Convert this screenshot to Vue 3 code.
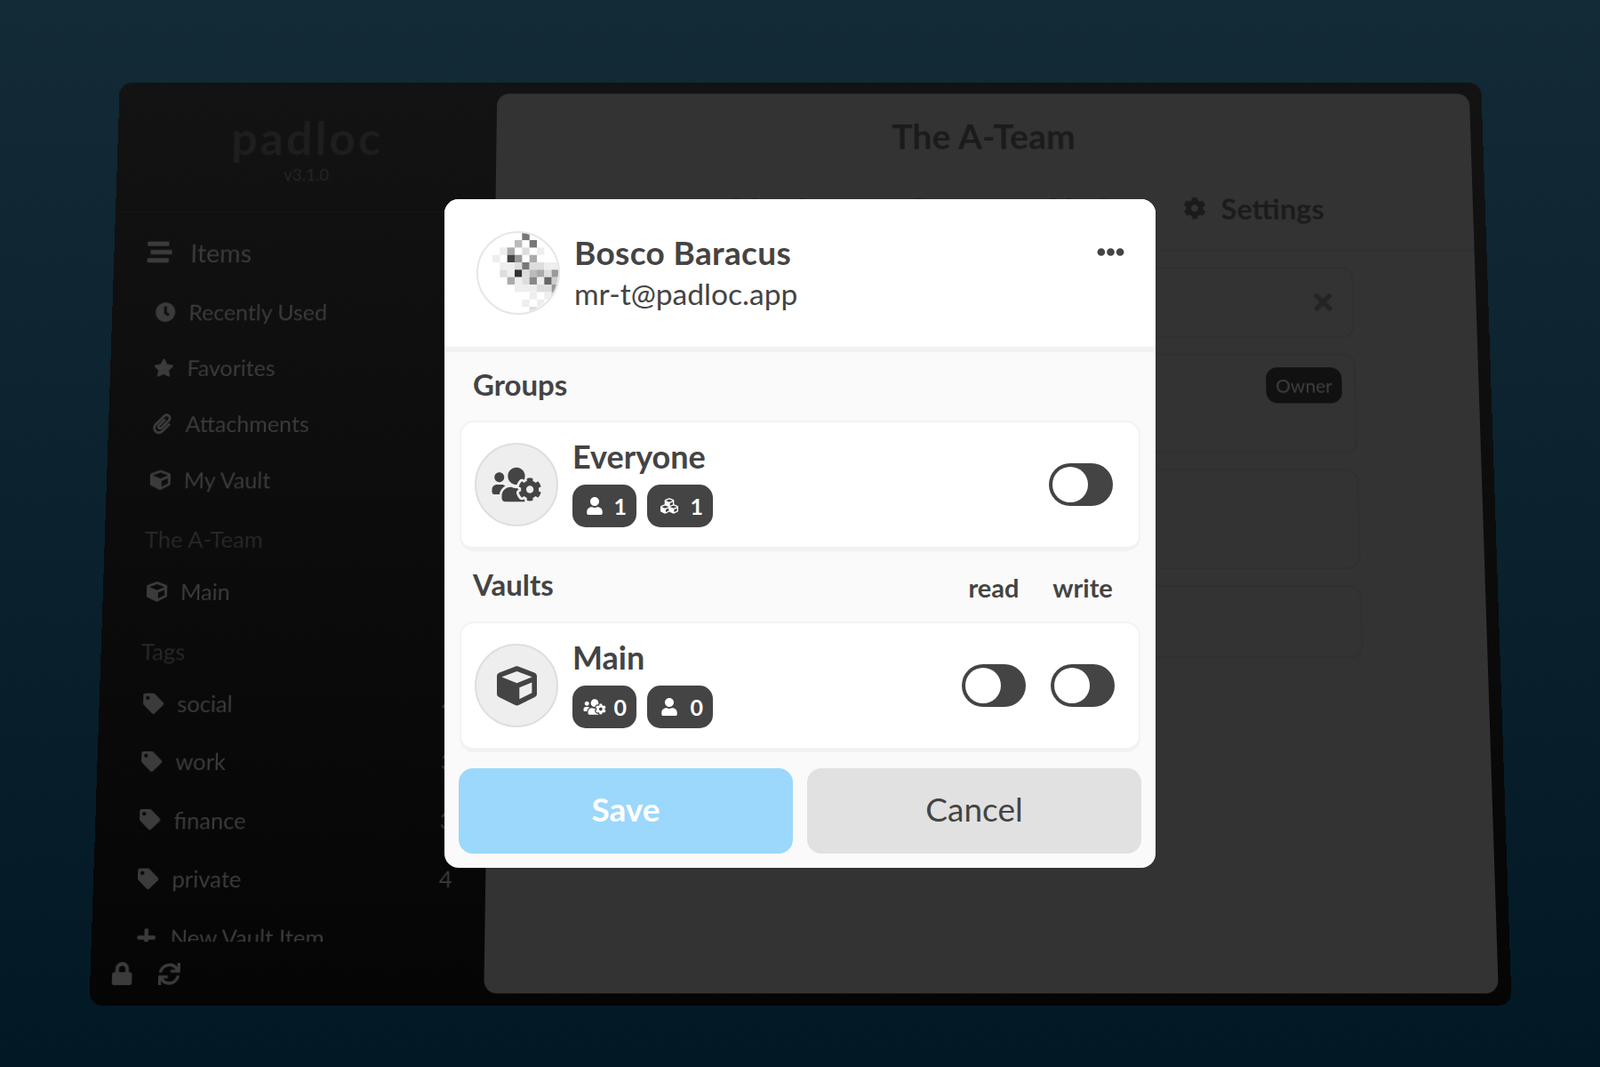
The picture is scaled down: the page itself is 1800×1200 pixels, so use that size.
<script setup>
const icons = {
  stream: ['0 0 512 512', 'M16 128h416c8.84 0 16-7.16 16-16V48c0-8.84-7.16-16-16-16H16C7.16 32 0 39.16 0 48v64c0 8.84 7.16 16 16 16zm480 80H80c-8.84 0-16 7.16-16 16v64c0 8.84 7.16 16 16 16h416c8.84 0 16-7.16 16-16v-64c0-8.84-7.16-16-16-16zm-64 176H16c-8.84 0-16 7.16-16 16v64c0 8.84 7.16 16 16 16h416c8.84 0 16-7.16 16-16v-64c0-8.84-7.16-16-16-16z'],
  clock: ['0 0 512 512', 'M256 8C119 8 8 119 8 256s111 248 248 248 248-111 248-248S393 8 256 8zm57.1 350.1L224.9 294c-3.1-2.3-4.9-5.9-4.9-9.7V116c0-6.6 5.4-12 12-12h48c6.6 0 12 5.4 12 12v137.7l63.5 46.2c5.4 3.9 6.5 11.4 2.6 16.8l-28.2 38.8c-3.9 5.3-11.4 6.5-16.8 2.6z'],
  star: ['0 0 576 512', 'M259.3 17.8L194 150.2 47.9 171.5c-26.2 3.8-36.7 36.1-17.7 54.6l105.7 103-25 145.5c-4.5 26.3 23.2 46 46.4 33.7L288 439.6l130.7 68.7c23.2 12.2 50.9-7.4 46.4-33.7l-25-145.5 105.7-103c19-18.5 8.5-50.8-17.7-54.6L382 150.2 316.7 17.8c-11.7-23.6-45.6-23.9-57.4 0z'],
  paperclip: ['0 0 448 512', 'M43.246 466.142c-58.43-60.289-57.341-157.511 1.386-217.581L254.392 34c44.316-45.332 116.351-45.336 160.671 0 43.89 44.894 43.943 117.329 0 162.276L232.214 383.128c-29.855 30.537-78.633 30.111-107.982-.998-28.275-29.97-27.368-77.473 1.452-106.953l143.743-146.835c6.182-6.314 16.312-6.422 22.626-.241l22.861 22.379c6.315 6.182 6.422 16.312.241 22.626L171.427 319.927c-4.932 5.045-5.236 13.428-.648 18.292 4.372 4.634 11.245 4.711 15.688.165l182.849-186.851c19.613-20.062 19.613-52.725-.011-72.798-19.189-19.627-49.957-19.637-69.154 0L90.39 293.295c-34.763 35.56-35.299 93.12-1.191 128.313 34.01 35.093 88.985 35.137 123.058.286l172.06-175.999c6.177-6.319 16.307-6.433 22.626-.256l22.877 22.364c6.319 6.177 6.434 16.307.256 22.626l-172.06 175.998c-59.576 60.938-155.943 60.216-214.77-.485z'],
  cube: ['0 0 512 512', 'M239.1 6.3l-208 78c-18.7 7-31.1 25-31.1 45v225.1c0 18.2 10.3 34.8 26.5 42.9l208 104c13.5 6.8 29.4 6.8 42.9 0l208-104c16.3-8.1 26.5-24.8 26.5-42.9V129.3c0-20-12.4-37.9-31.1-44.9l-208-78C262 2.2 250 2.2 239.1 6.3zM256 68.4l192 72v1.1l-192 78-192-78v-1.1l192-72zm32 356V275.5l160-65v133.9l-160 80z'],
  tag: ['0 0 512 512', 'M0 252.118V48C0 21.49 21.49 0 48 0h204.118a48 48 0 0 1 33.941 14.059l211.882 211.882c18.745 18.745 18.745 49.137 0 67.882L293.823 497.941c-18.745 18.745-49.137 18.745-67.882 0L14.059 286.059A48 48 0 0 1 0 252.118zM112 64c-26.51 0-48 21.49-48 48s21.49 48 48 48 48-21.49 48-48-21.49-48-48-48z'],
  plus: ['0 0 448 512', 'M416 208H272V64c0-17.67-14.33-32-32-32h-32c-17.67 0-32 14.33-32 32v144H32c-17.67 0-32 14.33-32 32v32c0 17.67 14.33 32 32 32h144v144c0 17.67 14.33 32 32 32h32c17.67 0 32-14.33 32-32V304h144c17.67 0 32-14.33 32-32v-32c0-17.67-14.33-32-32-32z'],
  lock: ['0 0 448 512', 'M400 224h-24v-72C376 68.2 307.8 0 224 0S72 68.2 72 152v72H48c-26.5 0-48 21.5-48 48v192c0 26.5 21.5 48 48 48h352c26.5 0 48-21.5 48-48V272c0-26.5-21.5-48-48-48zm-104 0H152v-72c0-39.7 32.3-72 72-72s72 32.3 72 72v72z'],
  sync: ['0 0 512 512', 'M440.65 12.57l4 82.77A247.16 247.16 0 0 0 255.83 8C134.73 8 33.91 94.92 12.29 209.82A12 12 0 0 0 24.09 224h49.05a12 12 0 0 0 11.67-9.26 175.91 175.91 0 0 1 317-56.94l-101.46-4.86a12 12 0 0 0-12.57 12v47.41a12 12 0 0 0 12 12H500a12 12 0 0 0 12-12V12a12 12 0 0 0-12-12h-47.37a12 12 0 0 0-11.98 12.57zM255.83 432a175.61 175.61 0 0 1-146-77.8l101.8 4.87a12 12 0 0 0 12.57-12v-47.4a12 12 0 0 0-12-12H12a12 12 0 0 0-12 12V500a12 12 0 0 0 12 12h47.35a12 12 0 0 0 12-12.6l-4.15-82.57A247.17 247.17 0 0 0 255.83 504c121.11 0 221.93-86.92 243.55-201.82a12 12 0 0 0-11.8-14.18h-49.05a12 12 0 0 0-11.67 9.26A175.86 175.86 0 0 1 255.83 432z'],
  cog: ['0 0 512 512', 'M487.4 315.7l-42.6-24.6c4.3-23.2 4.3-47 0-70.2l42.6-24.6c4.9-2.8 7.1-8.6 5.5-14-11.1-35.6-30-67.8-54.7-94.6-3.8-4.1-10-5.1-14.8-2.3L380.8 110c-17.9-15.4-38.5-27.3-60.8-35.1V25.8c0-5.6-3.9-10.5-9.4-11.7-36.7-8.2-74.3-7.8-109.2 0-5.5 1.2-9.4 6.1-9.4 11.7V75c-22.2 7.9-42.8 19.8-60.8 35.1L88.7 85.5c-4.9-2.8-11-1.9-14.8 2.3-24.7 26.7-43.6 58.9-54.7 94.6-1.7 5.4.6 11.2 5.5 14L67.3 221c-4.3 23.2-4.3 47 0 70.2l-42.6 24.6c-4.9 2.8-7.1 8.6-5.5 14 11.1 35.6 30 67.8 54.7 94.6 3.8 4.1 10 5.1 14.8 2.3l42.6-24.6c17.9 15.4 38.5 27.3 60.8 35.1v49.2c0 5.6 3.9 10.5 9.4 11.7 36.7 8.2 74.3 7.8 109.2 0 5.5-1.2 9.4-6.1 9.4-11.7v-49.2c22.2-7.9 42.8-19.8 60.8-35.1l42.6 24.6c4.9 2.8 11 1.9 14.8-2.3 24.7-26.7 43.6-58.9 54.7-94.6 1.5-5.5-.7-11.3-5.6-14.1zM256 336c-44.1 0-80-35.9-80-80s35.9-80 80-80 80 35.9 80 80-35.9 80-80 80z'],
  times: ['0 0 352 512', 'M242.72 256l100.07-100.07c12.28-12.28 12.28-32.19 0-44.48l-22.24-22.24c-12.28-12.28-32.19-12.28-44.48 0L176 189.28 75.93 89.21c-12.28-12.28-32.19-12.28-44.48 0L9.21 111.45c-12.28 12.28-12.28 32.19 0 44.48L109.28 256 9.21 356.07c-12.28 12.28-12.28 32.19 0 44.48l22.24 22.24c12.28 12.28 32.2 12.28 44.48 0L176 322.72l100.07 100.07c12.28 12.28 32.2 12.28 44.48 0l22.24-22.24c12.28-12.28 12.28-32.19 0-44.48L242.72 256z'],
  dots: ['0 0 512 512', 'M328 256c0 39.8-32.2 72-72 72s-72-32.2-72-72 32.2-72 72-72 72 32.2 72 72zm104-72c-39.8 0-72 32.2-72 72s32.2 72 72 72 72-32.2 72-72-32.2-72-72-72zm-352 0c-39.8 0-72 32.2-72 72s32.2 72 72 72 72-32.2 72-72-32.2-72-72-72z'],
  user: ['0 0 448 512', 'M224 256c70.7 0 128-57.3 128-128S294.7 0 224 0 96 57.3 96 128s57.3 128 128 128zm89.6 32h-16.7c-22.2 10.2-46.9 16-72.9 16s-50.6-5.8-72.9-16h-16.7C60.2 288 0 348.2 0 422.4V464c0 26.5 21.5 48 48 48h352c26.5 0 48-21.5 48-48v-41.6c0-74.2-60.2-134.4-134.4-134.4z'],
  cubes: ['0 0 512 512', 'M488.6 250.2L392 214V105.5c0-15-9.3-28.4-23.4-33.7l-100-37.5c-8.1-3.1-17.1-3.1-25.3 0l-100 37.5c-14.1 5.3-23.4 18.7-23.4 33.7V214l-96.6 36.2C9.3 255.5 0 268.9 0 283.9V394c0 13.6 7.7 26.1 19.9 32.2l100 50c10.1 5.1 22.1 5.1 32.2 0l103.9-52 103.9 52c10.1 5.1 22.1 5.1 32.2 0l100-50c12.2-6.1 19.9-18.6 19.9-32.2V283.9c0-15-9.3-28.4-23.4-33.7zM358 214.8l-85 31.9v-68.2l85-37v73.3zM154 104.1l102-38.2 102 38.2v.6l-102 41.4-102-41.4v-.6zm84 291.1l-85 42.5v-79.1l85-38.8v75.4zm0-112l-102 41.4-102-41.4v-.6l102-38.2 102 38.2v.6zm240 112l-85 42.5v-79.1l85-38.8v75.4zm0-112l-102 41.4-102-41.4v-.6l102-38.2 102 38.2v.6z'],
  usersCog: ['0 0 640 512', 'M610.5 341.3c2.6-14.1 2.6-28.5 0-42.6l25.8-14.9c3-1.7 4.3-5.2 3.3-8.5-6.7-21.6-18.2-41.2-33.2-57.4-2.3-2.5-6-3.1-9-1.4l-25.8 14.9c-10.9-9.3-23.4-16.5-36.9-21.3v-29.8c0-3.4-2.4-6.4-5.7-7.1-22.3-5-45-4.8-66.2 0-3.3.7-5.7 3.7-5.7 7.1v29.8c-13.5 4.8-26 12-36.9 21.3l-25.8-14.9c-2.9-1.7-6.7-1.1-9 1.4-15 16.2-26.5 35.8-33.2 57.4-1 3.3.4 6.8 3.3 8.5l25.8 14.9c-2.6 14.1-2.6 28.5 0 42.6l-25.8 14.9c-3 1.7-4.3 5.2-3.3 8.5 6.7 21.6 18.2 41.1 33.2 57.4 2.3 2.5 6 3.1 9 1.4l25.8-14.9c10.9 9.3 23.4 16.5 36.9 21.3v29.8c0 3.4 2.4 6.4 5.7 7.1 22.3 5 45 4.8 66.2 0 3.3-.7 5.7-3.7 5.7-7.1v-29.8c13.5-4.8 26-12 36.9-21.3l25.8 14.9c2.9 1.7 6.7 1.1 9-1.4 15-16.2 26.5-35.8 33.2-57.4 1-3.3-.4-6.8-3.3-8.5l-25.8-14.9zM496 368.5c-26.8 0-48.5-21.8-48.5-48.5s21.8-48.5 48.5-48.5 48.5 21.8 48.5 48.5-21.7 48.5-48.5 48.5zM96 224c35.3 0 64-28.7 64-64s-28.7-64-64-64-64 28.7-64 64 28.7 64 64 64zm224 32c1.9 0 3.7-.5 5.6-.6 8.3-21.7 20.5-42.1 36.3-59.2 7.4-8 17.9-12.6 28.9-12.6 6.9 0 13.7 1.8 19.6 5.3l7.9 4.6c.8-.5 1.6-.9 2.4-1.4 7-14.6 11.2-30.8 11.2-48 0-61.9-50.1-112-112-112S208 82.1 208 144c0 61.9 50.1 112 112 112zm105.2 194.5c-2.3-1.2-4.6-2.6-6.8-3.9-8.2 4.8-15.3 9.8-27.5 9.8-10.9 0-21.4-4.6-28.9-12.6-18.3-19.8-32.3-43.9-40.2-69.6-10.7-34.5 24.9-49.7 25.8-50.3-.1-2.6-.1-5.2 0-7.8l-7.9-4.6c-3.8-2.2-7-5-9.8-8.1-3.3.2-6.5.6-9.8.6-24.6 0-47.6-6-68.5-16h-8.3C179.6 288 128 339.6 128 403.2V432c0 26.5 21.5 48 48 48h255.4c-3.7-6-6.2-12.8-6.2-20.3v-9.2zM173.1 274.6C161.5 263.1 145.6 256 128 256H64c-35.3 0-64 28.7-64 64v32c0 17.7 14.3 32 32 32h65.9c6.3-47.4 34.9-87.3 75.2-109.4z'],
}

const topItems = [
  { icon: 'clock', label: 'Recently Used' },
  { icon: 'star', label: 'Favorites' },
  { icon: 'paperclip', label: 'Attachments' },
  { icon: 'cube', label: 'My Vault', count: 1 },
]
const tagItems = [
  { label: 'social', count: 4 },
  { label: 'work', count: 3 },
  { label: 'finance', count: 3 },
  { label: 'private', count: 4 },
]

// identicon cells: column, row, grey
const cells = [
  [4,0,'#777'],
  [3,1,'#bbb'],[5,1,'#777'],
  [1,2,'#eee'],[2,2,'#aaa'],[4,2,'#ddd'],[6,2,'#eee'],
  [0,3,'#eee'],[2,3,'#444'],[3,3,'#999'],[5,3,'#aaa'],
  [1,4,'#eee'],[2,4,'#eee'],[3,4,'#ddd'],[4,4,'#777'],[5,4,'#ddd'],[6,4,'#ddd'],[7,4,'#eee'],[8,4,'#eee'],
  [1,5,'#ddd'],[2,5,'#eee'],[3,5,'#333'],[4,5,'#ddd'],[5,5,'#bbb'],[6,5,'#aaa'],[7,5,'#ddd'],[8,5,'#999'],
  [2,6,'#aaa'],[3,6,'#eee'],[4,6,'#ddd'],[5,6,'#888'],[6,6,'#eee'],[7,6,'#666'],[8,6,'#ccc'],
  [3,7,'#eee'],[4,7,'#eee'],[5,7,'#eee'],[6,7,'#ddd'],[7,7,'#ddd'],[8,7,'#999'],
  [5,8,'#eee'],[7,8,'#eee'],[8,8,'#bbb'],
  [4,9,'#eee'],[6,9,'#eee'],
  [5,10,'#ddd'],
]
</script>

<template>
  <div class="stage">
    <div class="app">
      <aside class="sidebar">
        <div class="brand">
          <div class="logo">padloc</div>
          <div class="version">v3.1.0</div>
        </div>
        <nav class="nav">
          <div class="row top">
            <svg class="ic ic-top" :viewBox="icons.stream[0]"><path :d="icons.stream[1]" /></svg>
            <span>Items</span>
          </div>
          <div v-for="it in topItems" :key="it.label" class="row">
            <span class="slot"><svg class="ic" :viewBox="icons[it.icon][0]"><path :d="icons[it.icon][1]" /></svg></span>
            <span class="grow">{{ it.label }}</span>
            <span v-if="it.count" class="count">{{ it.count }}</span>
          </div>
          <div class="group g-team">The A-Team</div>
          <div class="row">
            <span class="slot"><svg class="ic" :viewBox="icons.cube[0]"><path :d="icons.cube[1]" /></svg></span>
            <span class="grow">Main</span>
          </div>
          <div class="group g-tags">Tags</div>
          <div v-for="t in tagItems" :key="t.label" class="row tagrow">
            <span class="slot"><svg class="ic" :viewBox="icons.tag[0]"><path :d="icons.tag[1]" /></svg></span>
            <span class="grow">{{ t.label }}</span>
            <span class="count">{{ t.count }}</span>
          </div>
          <div class="row">
            <span class="slot"><svg class="ic" :viewBox="icons.plus[0]"><path :d="icons.plus[1]" /></svg></span>
            <span class="grow">New Vault Item</span>
          </div>
        </nav>
        <div class="foot">
          <svg class="ic ic-lock" :viewBox="icons.lock[0]"><path :d="icons.lock[1]" /></svg>
          <svg class="ic ic-sync" :viewBox="icons.sync[0]"><path :d="icons.sync[1]" /></svg>
        </div>
      </aside>

      <main class="panel">
        <header class="panel-head">
          <div class="panel-title">The A-Team</div>
          <div class="tabs">
            <div class="tab">Members</div>
            <div class="tab">Groups</div>
            <div class="tab">Vaults</div>
            <div class="tab">
              <svg class="ic ic-gear" :viewBox="icons.cog[0]"><path :d="icons.cog[1]" /></svg>
              <span>Settings</span>
            </div>
          </div>
        </header>
        <div class="panel-body">
          <div class="ghost g1">
            <svg class="ic ic-x" :viewBox="icons.times[0]"><path :d="icons.times[1]" /></svg>
          </div>
          <div class="ghost g2"><span class="owner">Owner</span></div>
          <div class="ghost g3"></div>
          <div class="ghost g1"></div>
        </div>
      </main>
    </div>

    <div class="overlay">
      <section class="modal">
        <header class="m-head">
          <div class="avatar">
            <svg class="identicon" viewBox="0 0 94 94">
              <rect v-for="(c, i) in cells" :key="i" :x="18 + c[0] * 8.33" :y="1.7 + c[1] * 8.33" width="8.4" height="8.4" :fill="c[2]" />
            </svg>
          </div>
          <div class="who">
            <div class="name">Bosco Baracus</div>
            <div class="mail">mr-t@padloc.app</div>
          </div>
          <svg class="ic ic-dots" :viewBox="icons.dots[0]"><path :d="icons.dots[1]" /></svg>
        </header>

        <div class="m-body">
          <h2 class="sec">Groups</h2>
          <div class="card">
            <div class="circle"><svg class="ic ic-ug" :viewBox="icons.usersCog[0]"><path :d="icons.usersCog[1]" /></svg></div>
            <div class="info">
              <div class="title">Everyone</div>
              <div class="badges">
                <span class="badge b72"><svg class="ic ic-b" :viewBox="icons.user[0]"><path :d="icons.user[1]" /></svg>1</span>
                <span class="badge b74"><svg class="ic ic-b" :viewBox="icons.cubes[0]"><path :d="icons.cubes[1]" /></svg>1</span>
              </div>
            </div>
            <div class="toggle"><i class="knob"></i></div>
          </div>

          <div class="sec-row">
            <h2 class="sec">Vaults</h2>
            <span class="perm read">read</span>
            <span class="perm write">write</span>
          </div>
          <div class="card">
            <div class="circle"><svg class="ic ic-cube" :viewBox="icons.cube[0]"><path :d="icons.cube[1]" /></svg></div>
            <div class="info">
              <div class="title">Main</div>
              <div class="badges">
                <span class="badge b72"><svg class="ic ic-bu" :viewBox="icons.usersCog[0]"><path :d="icons.usersCog[1]" /></svg>0</span>
                <span class="badge b74"><svg class="ic ic-b" :viewBox="icons.user[0]"><path :d="icons.user[1]" /></svg>0</span>
              </div>
            </div>
            <div class="toggles">
              <div class="toggle"><i class="knob"></i></div>
              <div class="toggle"><i class="knob"></i></div>
            </div>
          </div>

          <div class="actions">
            <button class="btn save">Save</button>
            <button class="btn cancel">Cancel</button>
          </div>
        </div>
      </section>
    </div>
  </div>
</template>

<style>
html, body { margin: 0; padding: 0; }
</style>

<style scoped>
.stage {
  position: relative;
  width: 1800px;
  height: 1200px;
  overflow: hidden;
  display: flex;
  align-items: center;
  justify-content: center;
  background: linear-gradient(180deg, #132a37 0%, #021825 100%);
  font-family: "Lato", "Noto Sans", sans-serif;
}
.ic { display: block; fill: currentColor; flex: none; }

.app {
  width: 1565px;
  height: 1041px;
  flex: none;
  display: flex;
  border-radius: 14px;
  background: linear-gradient(180deg, #131313 0%, #050505 100%);
  transform: perspective(2000px) rotateX(4.85deg);
  color: #3b3b3b;
}
.sidebar { width: 434px; flex: none; display: flex; flex-direction: column; }
.brand {
  height: 151px;
  border-bottom: 1px solid #161616;
  display: flex;
  flex-direction: column;
  align-items: center;
}
.logo {
  margin-top: 35px;
  font-size: 53px;
  line-height: 60px;
  letter-spacing: 3px;
  font-weight: 700;
  color: #1e1e1e;
}
.version { margin-top: 1px; font-size: 19px; line-height: 24px; color: #262626; }
.nav { height: 820px; overflow: hidden; padding-top: 14px; box-sizing: border-box; display: flex; flex-direction: column; padding-left: 50px; padding-right: 37px; }
.row { height: 64px; flex: none; display: flex; align-items: center; font-size: 25.2px; }
.row.top { height: 69px; margin-left: -12px; font-size: 29px; padding-bottom: 5px; box-sizing: border-box; }
.row.tagrow { height: 64.3px; }
.slot { width: 37px; flex: none; display: flex; }
.slot .ic { width: 23px; height: 23px; margin-left: -1px; }
.ic-top { width: 28px; height: 28px; margin-right: 21px; }
.grow { flex: 1; }
.count { font-size: 25px; }
.group { flex: none; margin-left: -5px; box-sizing: border-box; font-size: 25.6px; line-height: 36px; color: #272727; }
.g-team { height: 62px; padding-top: 17px; }
.g-tags { height: 61px; padding-top: 17px; }
.foot { flex: 1; display: flex; align-items: center; gap: 29px; padding-left: 24px; }
.ic-lock { width: 22px; height: 25px; }
.ic-sync { width: 24px; height: 24px; }

.panel {
  flex: 1;
  margin: 13px 14px 13px 0;
  border-radius: 14px;
  background: #333;
  color: #1b1b1b;
  display: flex;
  flex-direction: column;
}
.panel-head { height: 182px; border-bottom: 2px solid #313131; flex: none; }
.panel-title { height: 100px; display: flex; align-items: center; justify-content: center; font-size: 40px; font-weight: 700; }
.tabs { height: 68px; display: flex; align-items: center; justify-content: flex-end; gap: 60px; padding-right: 170px; font-size: 33px; font-weight: 700; }
.tab { display: flex; align-items: center; gap: 17px; }
.ic-gear { width: 26px; height: 26px; }
.panel-body { padding: 18px 139px; display: flex; flex-direction: column; gap: 18px; }
.ghost { border: 2px solid #303030; border-radius: 14px; box-sizing: border-box; display: flex; justify-content: flex-end; }
.g1 { height: 82px; align-items: center; padding-right: 22px; }
.g2 { height: 114px; padding: 14px; }
.g3 { height: 113px; }
.ic-x { width: 22px; height: 30px; color: #242424; }
.owner { height: 41px; width: 86px; background: #111; border-radius: 13px; display: flex; align-items: center; justify-content: center; font-size: 21px; font-weight: 500; color: #3c3c3c; }

.overlay { position: absolute; inset: 0; display: flex; align-items: center; justify-content: center; }
.modal { width: 800px; border-radius: 16px; overflow: hidden; background: #fafafa; color: #444; }
.m-head {
  height: 166px;
  border-bottom: 6px solid #f2f2f2;
  background: #fff;
  display: flex;
  align-items: center;
  padding: 0 35px 0 36px;
}
.avatar { width: 94px; height: 94px; box-sizing: border-box; border: 2px solid #e6e6e6; border-radius: 50%; overflow: hidden; flex: none; position: relative; }
.identicon { position: absolute; left: -2px; top: -2px; width: 94px; height: 94px; display: block; }
.who { flex: 1; margin-left: 16px; margin-bottom: 2px; }
.name { font-size: 37px; line-height: 46px; font-weight: 700; letter-spacing: .35px; }
.mail { margin-top: 1px; font-size: 33.6px; line-height: 44px; }
.ic-dots { width: 31px; height: 31px; margin-bottom: 48px; }
.sec { margin: 0; font-size: 33px; font-weight: 700; line-height: 40px; height: 77px; box-sizing: border-box; padding: 16px 0 0 32px; }
.sec-row { height: 79px; display: flex; align-items: center; padding-left: 32px; padding-bottom: 5px; box-sizing: border-box; }
.sec-row .sec { padding: 0; height: auto; flex: 1; }
.perm { font-size: 29px; font-weight: 700; text-align: center; width: 100px; padding-top: 6px; }
.perm.write { margin-right: 32px; }
.card {
  margin: 0 17px;
  height: 147px;
  box-sizing: border-box;
  background: #fff;
  border: 2px solid #f2f2f2;
  border-bottom-width: 5px;
  border-radius: 16px;
  display: flex;
  align-items: center;
  padding: 0 29px 0 15px;
}
.circle { width: 94px; height: 94px; box-sizing: border-box; border: 2px solid #dedede; background: #eee; border-radius: 50%; flex: none; display: flex; align-items: center; justify-content: center; }
.ic-ug { width: 56px; height: 44px; }
.ic-cube { width: 45px; height: 45px; }
.info { flex: 1; margin-left: 16px; padding-bottom: 6px; }
.title { font-size: 36px; line-height: 44px; font-weight: 700; margin-bottom: 10px; }
.badges { display: flex; gap: 12px; }
.badge { height: 48px; box-sizing: border-box; background: #444; color: #fff; border-radius: 15px; display: flex; align-items: center; justify-content: space-between; padding: 0 11px 0 15px; font-size: 25px; font-weight: 700; }
.b72 { width: 72px; }
.b74 { width: 74px; }
.ic-b { width: 20px; height: 20px; }
.ic-bu { width: 26px; height: 20px; margin-left: -3px; }
.toggle { width: 72px; height: 48px; box-sizing: border-box; padding: 4px; border-radius: 24px; background: #444; flex: none; }
.knob { display: block; width: 40px; height: 40px; border-radius: 50%; background: #fff; }
.toggles { display: flex; gap: 28px; margin-right: -2px; }
.actions { display: flex; gap: 16px; padding: 18px 16px 16px; }
.btn { flex: 1; height: 96px; border: 0; border-radius: 16px; font: inherit; font-size: 37px; padding: 0 0 5px; }
.save { background: #9bd8fb; color: #fff; font-weight: 700; }
.cancel { background: #e1e1e1; color: #444; }
</style>
